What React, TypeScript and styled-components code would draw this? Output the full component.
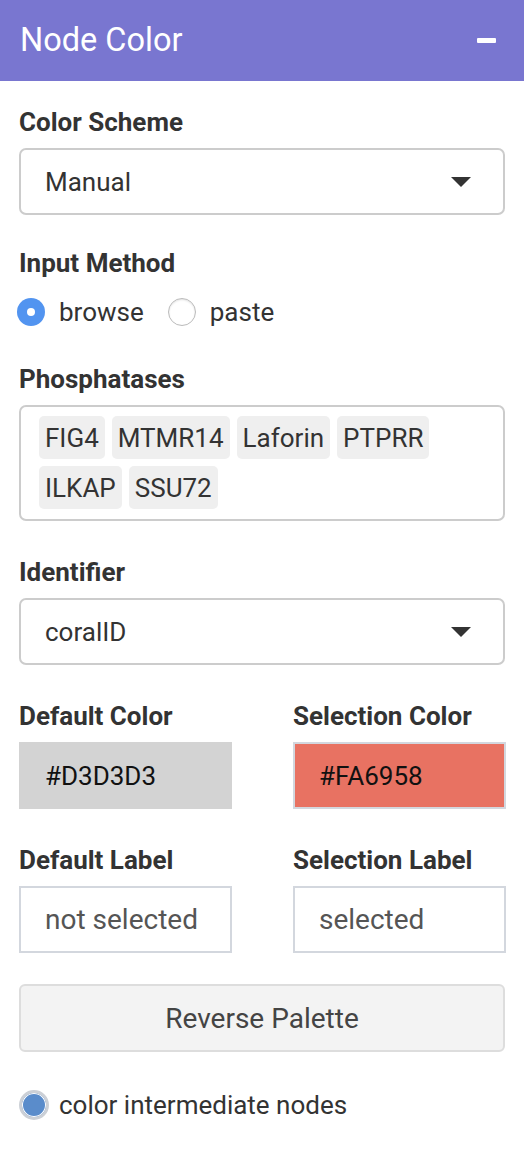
import React from "react";
import styled, { createGlobalStyle } from "styled-components";

const GlobalStyle = createGlobalStyle`
  html, body { margin: 0; padding: 0; background: #fff; }
  body { font-family: Roboto, "Liberation Sans", Arial, sans-serif; color: #333; }
  * { box-sizing: border-box; }
`;

const Panel = styled.div`
  width: 524px;
  min-height: 1174px;
  background: #fff;
`;

const Header = styled.div`
  height: 81px;
  background: #7976d0;
  display: flex;
  align-items: center;
  justify-content: space-between;
  padding: 0 28px 0 20px;
`;

const Title = styled.h1`
  margin: 0;
  font-size: 32.5px;
  font-weight: 400;
  color: #fff;
  line-height: 1;
`;

const Minus = styled.span`
  display: block;
  width: 19px;
  height: 5px;
  background: #fff;
  border-radius: 1px;
`;

const Body = styled.div`
  padding: 26px 19px 40px 19px;
  display: flex;
  flex-direction: column;
`;

const Group = styled.div<{ $mt?: number }>`
  margin-top: ${(p) => p.$mt ?? 0}px;
  display: flex;
  flex-direction: column;
`;

const Label = styled.div`
  font-size: 26px;
  font-weight: 700;
  line-height: 30px;
  color: #333;
  margin-bottom: 11px;
  white-space: nowrap;
`;

const SelectBox = styled.div`
  height: 67px;
  border: 2px solid #ccc;
  border-radius: 7px;
  display: flex;
  align-items: center;
  justify-content: space-between;
  padding: 0 32px 0 24px;
  font-size: 26px;
  color: #333;
`;

const Caret = styled.span`
  width: 0;
  height: 0;
  border-left: 10.5px solid transparent;
  border-right: 10.5px solid transparent;
  border-top: 10px solid #333;
`;

const RadioRow = styled.div`
  display: flex;
  align-items: center;
  margin-top: 7px;
  height: 32px;
`;

const RadioItem = styled.label`
  display: flex;
  align-items: center;
  font-size: 26px;
  color: #333;
  margin-right: 26px;
`;

const RadioCircle = styled.span<{ $checked?: boolean }>`
  width: 28px;
  height: 28px;
  border-radius: 50%;
  margin-left: -2px;
  margin-right: 14px;
  display: flex;
  align-items: center;
  justify-content: center;
  background: ${(p) => (p.$checked ? "#5294f0" : "#fff")};
  border: ${(p) => (p.$checked ? "none" : "1.5px solid #bbb")};
  box-shadow: ${(p) => (p.$checked ? "none" : "inset 0 1px 2px rgba(0,0,0,0.12)")};
`;

const RadioDot = styled.span`
  width: 8px;
  height: 8px;
  border-radius: 50%;
  background: #fff;
`;

const TagBox = styled.div`
  border: 2px solid #ccc;
  border-radius: 7px;
  padding: 9px 18px 10px;
  display: flex;
  flex-wrap: wrap;
  gap: 7px 7px;
`;

const Tag = styled.span`
  height: 43px;
  display: inline-flex;
  align-items: center;
  padding: 0 6px;
  background: #efefef;
  border-radius: 5px;
  font-size: 26px;
  color: #333;
`;

const TwoCol = styled.div<{ $mt?: number }>`
  display: grid;
  grid-template-columns: 213px 213px;
  column-gap: 61px;
  margin-top: ${(p) => p.$mt ?? 0}px;
`;

const ColorField = styled.div<{ $bg: string; $border: string }>`
  height: 67px;
  background: ${(p) => p.$bg};
  border: 2px solid ${(p) => p.$border};
  display: flex;
  align-items: center;
  padding-left: 24px;
  font-size: 26px;
  color: #111;
`;

const TextField = styled.div`
  height: 67px;
  border: 2px solid #d3d7de;
  display: flex;
  align-items: center;
  padding-left: 24px;
  font-size: 28px;
  color: #555;
`;

const Button = styled.div`
  margin-top: 31px;
  height: 68px;
  border: 2px solid #ddd;
  border-radius: 6px;
  background: #f3f3f3;
  display: flex;
  align-items: center;
  justify-content: center;
  font-size: 28px;
  color: #444;
`;

const BigRadio = styled.span`
  width: 30px;
  height: 30px;
  border-radius: 50%;
  border: 3px solid #ccd0d6;
  background: #5a8ccb;
  box-shadow: inset 0 0 0 1px #fff;
  margin-right: 10px;
  flex: none;
`;

const CheckRow = styled.div`
  display: flex;
  align-items: center;
  height: 30px;
  margin-top: 38px;
  font-size: 26px;
  color: #333;
`;

const tags = ["FIG4", "MTMR14", "Laforin", "PTPRR", "ILKAP", "SSU72"];

export default function App() {
  return (
    <Panel>
      <GlobalStyle />
      <Header>
        <Title>Node Color</Title>
        <Minus />
      </Header>
      <Body>
        <Group>
          <Label>Color Scheme</Label>
          <SelectBox>
            <span>Manual</span>
            <Caret />
          </SelectBox>
        </Group>
        <Group $mt={33}>
          <Label>Input Method</Label>
          <RadioRow>
            <RadioItem>
              <RadioCircle $checked>
                <RadioDot />
              </RadioCircle>
              browse
            </RadioItem>
            <RadioItem>
              <RadioCircle />
              paste
            </RadioItem>
          </RadioRow>
        </Group>
        <Group $mt={36}>
          <Label>Phosphatases</Label>
          <TagBox>
            {tags.map((t) => (
              <Tag key={t}>{t}</Tag>
            ))}
          </TagBox>
        </Group>
        <Group $mt={36}>
          <Label>Identifier</Label>
          <SelectBox>
            <span>coralID</span>
            <Caret />
          </SelectBox>
        </Group>
        <TwoCol $mt={36}>
          <Group>
            <Label>Default Color</Label>
            <ColorField $bg="#d3d3d3" $border="#d3d3d3">#D3D3D3</ColorField>
          </Group>
          <Group>
            <Label>Selection Color</Label>
            <ColorField $bg="#e87262" $border="#d3d7de">#FA6958</ColorField>
          </Group>
        </TwoCol>
        <TwoCol $mt={36}>
          <Group>
            <Label>Default Label</Label>
            <TextField>not selected</TextField>
          </Group>
          <Group>
            <Label>Selection Label</Label>
            <TextField>selected</TextField>
          </Group>
        </TwoCol>
        <Button>Reverse Palette</Button>
        <CheckRow>
          <BigRadio />
          color intermediate nodes
        </CheckRow>
      </Body>
    </Panel>
  );
}
